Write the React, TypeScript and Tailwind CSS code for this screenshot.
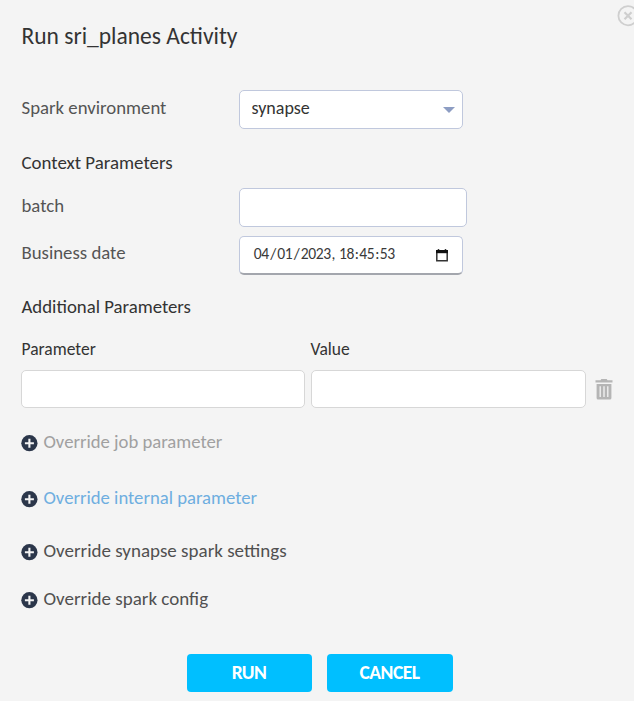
import type { ReactNode } from "react";

function Row({ label, className, children }: { label: ReactNode; className: string; children: ReactNode }) {
  return (
    <div className={`flex ${className}`}>
      <div className="w-[218px] pl-[0.5px] text-[#545454]">{label}</div>
      {children}
    </div>
  );
}

function Override({ className, children }: { className: string; children: ReactNode }) {
  return (
    <div className={`flex h-[24px] items-center gap-[5.5px] ${className}`}>
      <svg className="mt-[2px] h-[17px] w-[17px]" viewBox="0 0 17 17">
        <circle cx="8.4" cy="8.2" r="8.1" fill="#2b364a" />
        <path d="M8.4 3.7v9M3.9 8.2h9" stroke="#f4f4f4" strokeWidth="2.1" />
      </svg>
      <span>{children}</span>
    </div>
  );
}

export default function App() {
  return (
    <div className="relative h-[701px] w-[634px] overflow-hidden bg-[#f4f4f4] pl-[21px] pt-[20px] font-[Carlito,Lato,sans-serif] text-[18.8px] leading-[24px] whitespace-nowrap text-[#333]">
      <svg className="absolute left-[617px] top-[4px] h-[24px] w-[24px]" viewBox="0 0 24 24" fill="none" stroke="#cfcfcf">
        <circle cx="11" cy="11.7" r="9.6" strokeWidth="1.8" />
        <path d="M7.5 8.2l7 7M14.5 8.2l-7 7" strokeWidth="2.2" />
      </svg>
      <h1 className="h-[32px] pl-[0.5px] text-[23.5px] leading-[32px]"><span>Run sri_planes Activity</span></h1>
      <Row className="mt-[38px] h-[39px]" label={<div className="pt-[6px]">Spark environment</div>}>
        <div className="flex w-[224px] items-center justify-between rounded-[5px] border border-[#c0c8dd] bg-white pl-[11.5px] pr-[7px]">
          <span className="pb-[3px] text-[18px]">synapse</span>
          <svg className="h-[6px] w-[12px]" viewBox="0 0 12 6"><path d="M0 0h12L6 6z" fill="#8d9dc3" /></svg>
        </div>
      </Row>
      <h2 className="mt-[22px] pl-[0.5px] text-[18.9px]"><span>Context Parameters</span></h2>
      <Row className="mt-[13px] h-[39px]" label={<div className="pt-[6px]">batch</div>}>
        <div className="w-[228px] rounded-[5px] border border-[#c0c8dd] bg-white" />
      </Row>
      <Row className="mt-[9px] h-[39px]" label={<div className="pt-[5px]">Business date</div>}>
        <div className="flex w-[224px] items-center justify-between rounded-[5px] border border-b-2 border-[#c0c8dd] border-b-[#a3a6ad] bg-white pl-[13px] pr-[14.5px] text-[15.6px] tracking-[-0.4px] text-[#3a3a3a]">
          <div className="flex pb-[2px]">
            <span className="px-[0.8px]">04</span><span className="px-[0.6px]">/</span>
            <span className="px-[0.8px]">01</span><span className="px-[0.6px]">/</span>
            <span className="px-[0.8px]">2023</span><span className="pr-[3.2px]">,</span>
            <span className="px-[0.8px]">18</span><span>:</span>
            <span className="px-[0.8px]">45</span><span>:</span>
            <span className="px-[0.8px]">53</span>
          </div>
          <svg className="mt-[1px] h-[13px] w-[12px]" viewBox="0 0 12 13">
            <path d="M2.5 0v2M9.5 0v2M.8 3v8.8h10.4V3" fill="none" stroke="#333" strokeWidth="1.5" />
            <path d="M0 1h12v3.2H0z" fill="#111" />
          </svg>
        </div>
      </Row>
      <h2 className="mt-[20px] pl-[0.5px]"><span>Additional Parameters</span></h2>
      <div className="mt-[18px] flex text-[17.5px]">
        <div className="w-[289.5px] pl-[0.5px]"><span>Parameter</span></div>
        <div><span>Value</span></div>
      </div>
      <div className="mt-[9px] flex h-[38px]">
        <div className="w-[284px] rounded-[5px] border border-[#d7d7d7] bg-white" />
        <div className="ml-[5.5px] w-[275px] rounded-[5px] border border-[#d7d7d7] bg-white" />
        <svg className="ml-[9.5px] mt-[9px] h-[21px] w-[18px]" viewBox="0 0 18 21" fill="#b5b5b5">
          <path d="M5.5 1.2L6.3 0h5.4l.8 1.2H17.5v2.4H.5V1.2zM1.6 5h14.8v14q0 1.5-1.5 1.5H3.1q-1.5 0-1.5-1.5z" />
          <path d="M5.2 7.3v10.8M9 7.3v10.8M12.8 7.3v10.8" stroke="#f4f4f4" strokeWidth="1.3" />
        </svg>
      </div>
      <Override className="mt-[22px] text-[18.7px] text-[#a0a0a0]">Override job parameter</Override>
      <Override className="mt-[32px] text-[18.7px] text-[#6eaee0]">Override internal parameter</Override>
      <Override className="mt-[29px] text-[19px] text-[#505050]">Override synapse spark settings</Override>
      <Override className="mt-[24px] text-[19px] text-[#505050]">Override spark config</Override>
      <div className="ml-[165.5px] mt-[43px] flex gap-[15px] font-bold text-[19.5px] tracking-[-0.5px] text-white">
        <button className="h-[38px] w-[125px] rounded-[4px] bg-[#00bfff] pb-[3px]">RUN</button>
        <button className="h-[38px] w-[126px] rounded-[4px] bg-[#00bfff] pb-[3px]">CANCEL</button>
      </div>
    </div>
  );
}
